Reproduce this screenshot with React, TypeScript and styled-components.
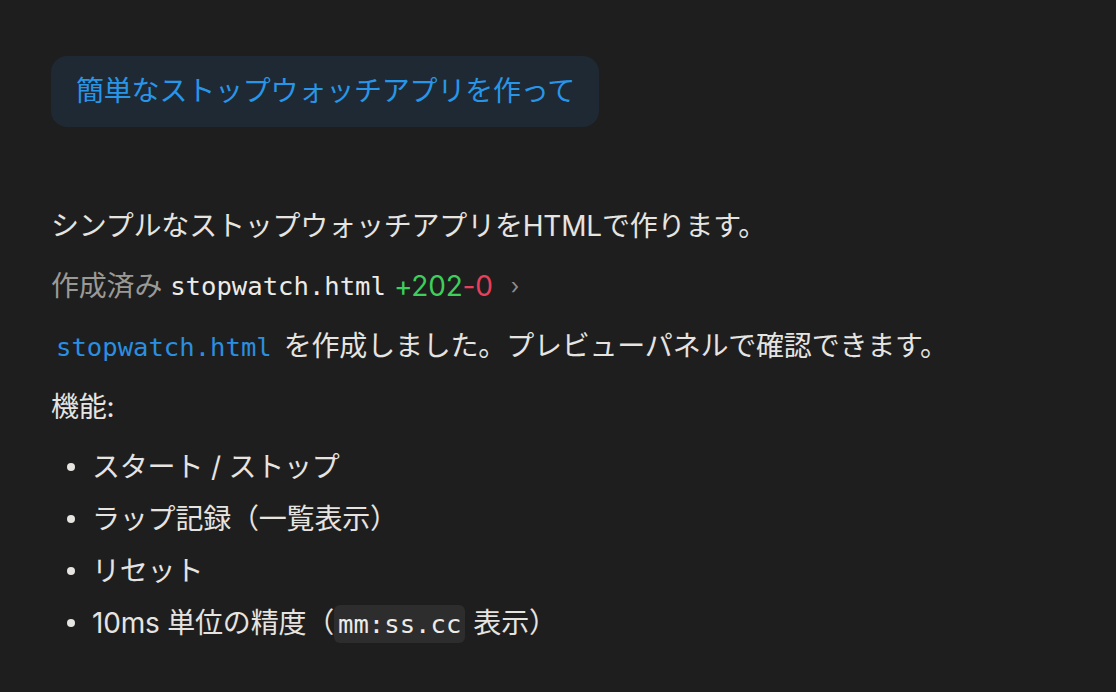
import React from 'react';
import styled, { createGlobalStyle } from 'styled-components';

const GlobalStyle = createGlobalStyle`
  html, body {
    margin: 0;
    padding: 0;
    background: #1e1e1e;
  }
  body {
    font-family: "Inter", "Noto Sans CJK JP", sans-serif;
    color: #e6e4e1;
  }
`

const Page = styled.div`
  width: 1116px;
  height: 692px;
  box-sizing: border-box;
  padding: 56px 0 0 51px;
  background: #1e1e1e;
  overflow: hidden;
`

const UserBubble = styled.div`
  display: inline-block;
  background: #1f2933;
  border-radius: 16px;
  padding: 16px 24px 17px 25px;
  font-size: 28px;
  line-height: 38px;
  color: #2896e8;
  letter-spacing: -0.2px;
`

const Reply = styled.div`
  display: flex;
  flex-direction: column;
  gap: 16px;
  margin-top: 77px;
  font-size: 28px;
  line-height: 44px;
`

const Para = styled.p`
  margin: 0;
  letter-spacing: -0.2px;
`

const Mono = styled.code<{ $tone?: 'link' | 'plain' }>`
  font-family: "DejaVu Sans Mono", "Liberation Mono", monospace;
  font-size: 25.6px;
  letter-spacing: 0;
  color: ${p => (p.$tone === 'link' ? '#2a8fe0' : '#ecebe8')};
`

const FileRow = styled.div`
  display: flex;
  align-items: center;
  gap: 8px;
  letter-spacing: -0.2px;
`

const Muted = styled.span`
  color: #9a9996;
`

const Diff = styled.span`
  display: inline-flex;
  font-size: 28px;
`

const Added = styled.span`
  color: #3dce5b;
`

const Removed = styled.span`
  color: #ea3f5b;
`

const Chevron = styled.span`
  color: #8d8d8b;
  font-size: 22px;
  margin-left: 10px;
`

const LinkCode = styled(Mono)`
  margin-left: 5px;
  margin-right: 12px;
`

const List = styled.ul`
  list-style: none;
  margin: 0;
  padding: 0;
  display: flex;
  flex-direction: column;
  gap: 8px;
`

const Item = styled.li`
  position: relative;
  padding-left: 41px;
  letter-spacing: -0.2px;
  &::before {
    content: '';
    position: absolute;
    left: 16px;
    top: 18px;
    width: 8px;
    height: 8px;
    border-radius: 50%;
    background: #e6e4e1;
  }
`

const InlineCode = styled(Mono)`
  background: #2d2d2d;
  border-radius: 6px;
  padding: 4px 4px;
  margin-right: 8px;
`

export default function App() {
  return (
    <>
      <GlobalStyle />
      <Page>
        <UserBubble>簡単なストップウォッチアプリを作って</UserBubble>
        <Reply>
          <Para>シンプルなストップウォッチアプリをHTMLで作ります。</Para>
          <FileRow>
            <Muted>作成済み</Muted>
            <Mono>stopwatch.html</Mono>
            <Diff>
              <Added>+202</Added>
              <Removed>-0</Removed>
            </Diff>
            <Chevron>›</Chevron>
          </FileRow>
          <Para>
            <LinkCode $tone="link">stopwatch.html</LinkCode>を作成しました。プレビューパネルで確認できます。
          </Para>
          <Para>機能:</Para>
          <List>
            <Item>スタート / ストップ</Item>
            <Item>ラップ記録（一覧表示）</Item>
            <Item>リセット</Item>
            <Item>
              10ms 単位の精度（<InlineCode>mm:ss.cc</InlineCode>表示）
            </Item>
          </List>
        </Reply>
      </Page>
    </>
  )
}
